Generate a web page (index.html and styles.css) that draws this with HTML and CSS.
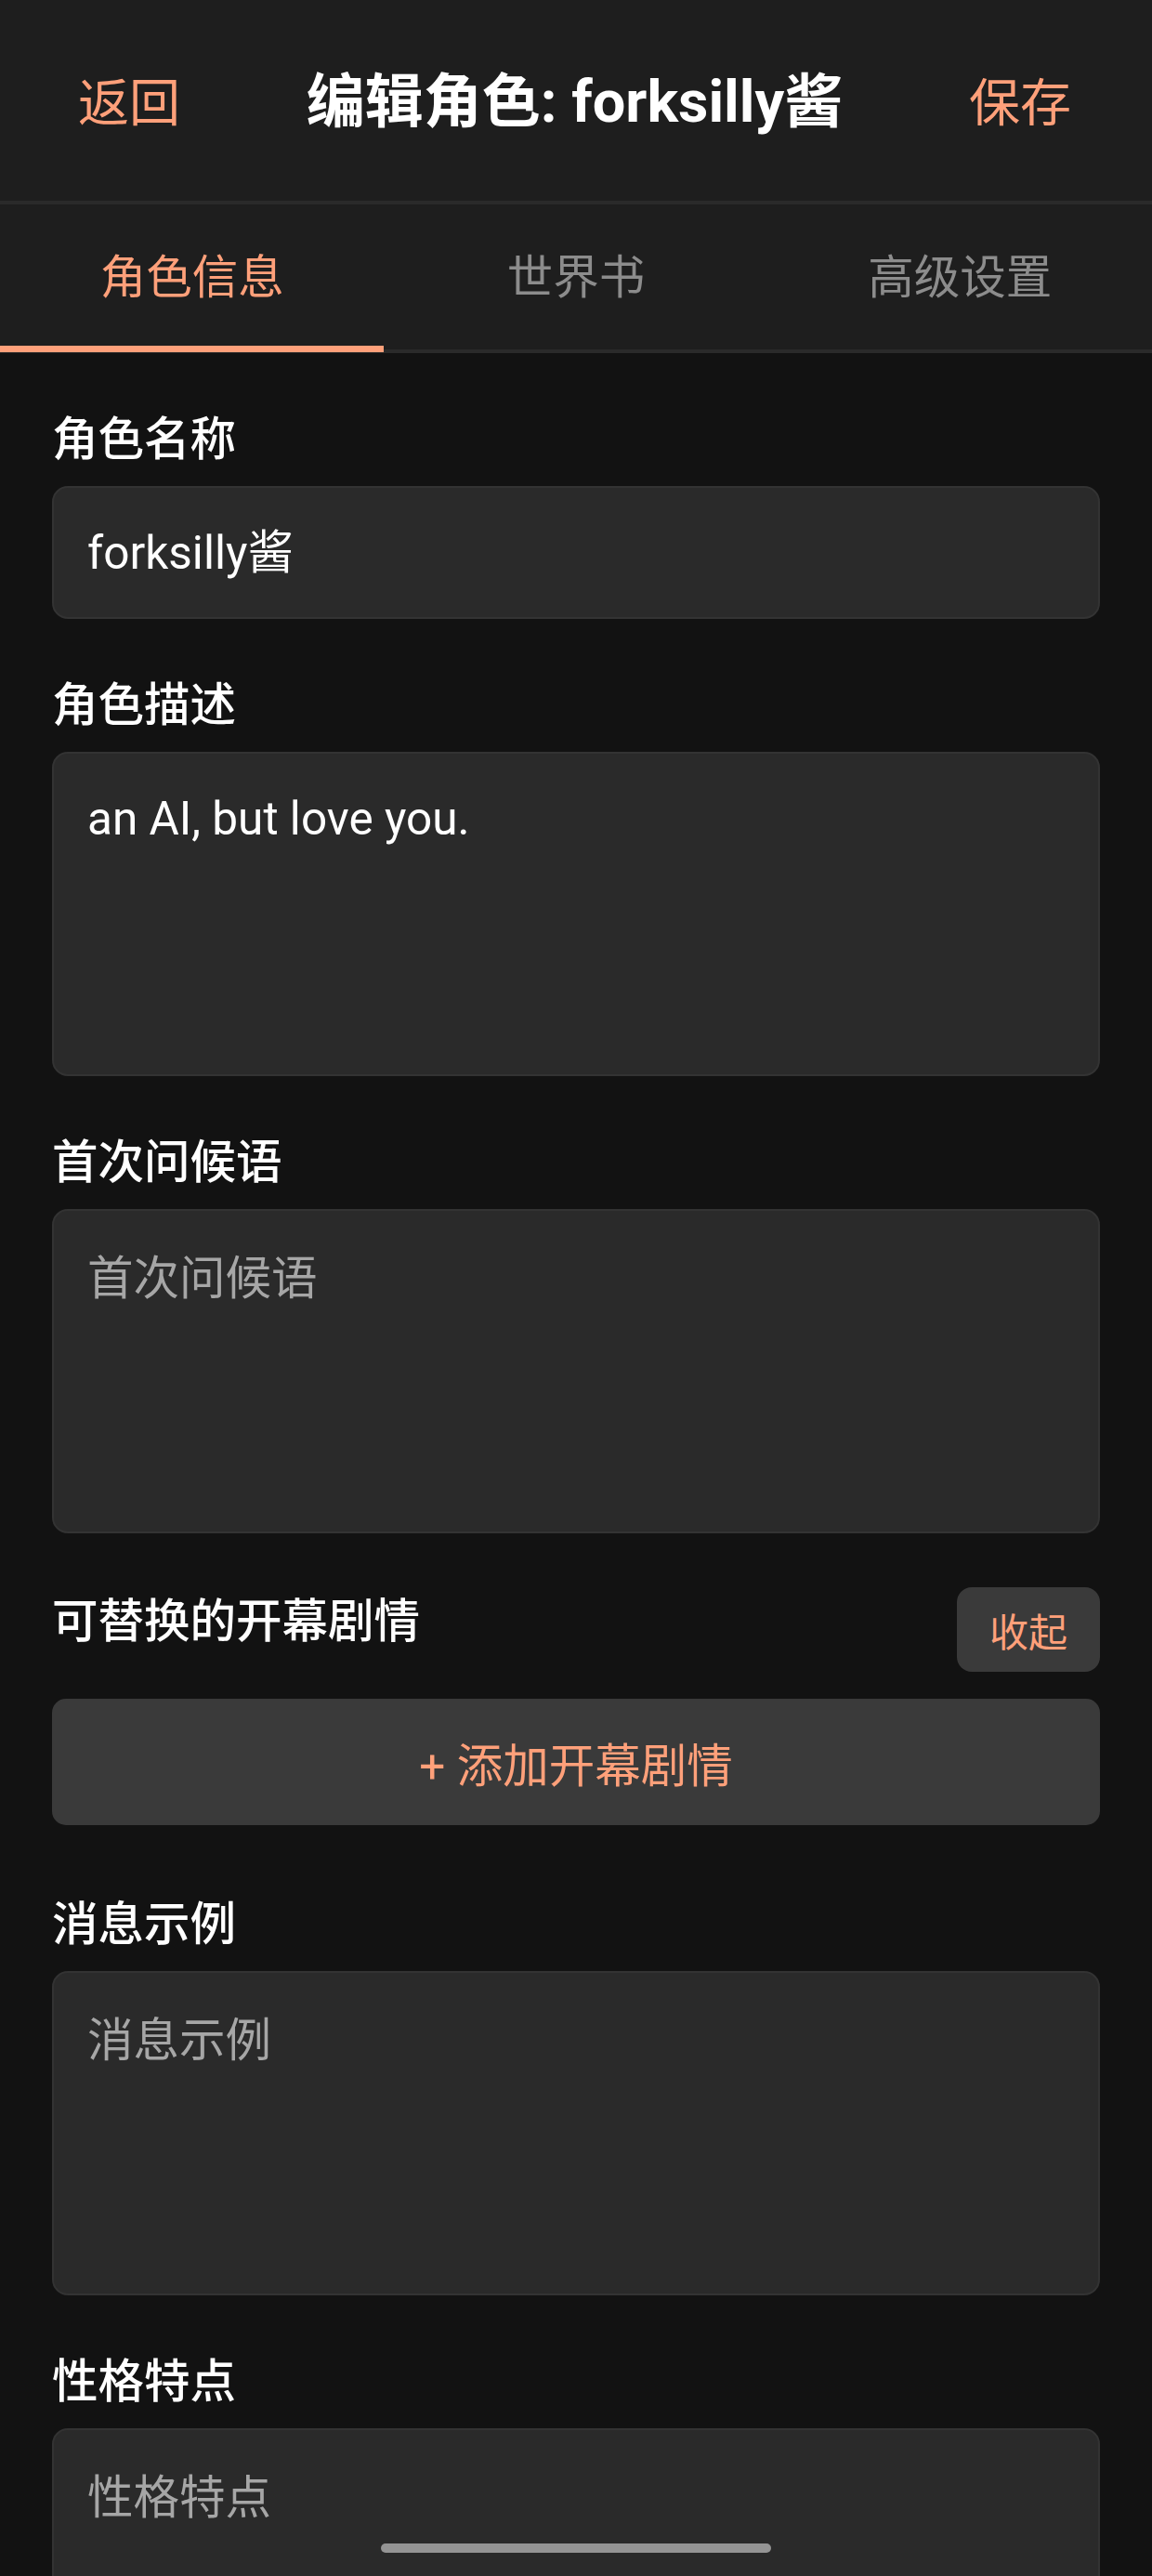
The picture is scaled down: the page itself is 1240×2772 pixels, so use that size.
FILE: index.html
```html
<!DOCTYPE html>
<html lang="zh-CN">
<head>
<meta charset="utf-8">
<title>编辑角色</title>
<link rel="stylesheet" href="styles.css">
</head>
<body>
<div class="app">
  <header class="topbar">
    <span class="topbar-btn">返回</span>
    <h1 class="topbar-title">编辑角色: forksilly酱</h1>
    <span class="topbar-btn">保存</span>
  </header>
  <nav class="tabs">
    <div class="tab tab-active">角色信息</div>
    <div class="tab">世界书</div>
    <div class="tab">高级设置</div>
  </nav>
  <main class="content">
    <section class="field">
      <div class="label">角色名称</div>
      <div class="control control-input">forksilly酱</div>
    </section>
    <section class="field">
      <div class="label">角色描述</div>
      <div class="control control-area">an AI, but love you.</div>
    </section>
    <section class="field">
      <div class="label">首次问候语</div>
      <div class="control control-area placeholder">首次问候语</div>
    </section>
    <section class="field field-openings">
      <div class="row">
        <div class="label">可替换的开幕剧情</div>
        <div class="small-btn">收起</div>
      </div>
      <div class="add-btn">+ 添加开幕剧情</div>
    </section>
    <section class="field">
      <div class="label">消息示例</div>
      <div class="control control-area placeholder">消息示例</div>
    </section>
    <section class="field">
      <div class="label">性格特点</div>
      <div class="control control-area placeholder">性格特点</div>
    </section>
  </main>
  <div class="home-bar"></div>
</div>
</body>
</html>
```
FILE: styles.css
```css
* { box-sizing: border-box; }
html, body {
  margin: 0;
  padding: 0;
  background: #121212;
  height: 2772px;
  overflow: hidden;
}
body {
  font-family: Roboto, "Noto Sans CJK SC", sans-serif;
  color: #ffffff;
}
.app {
  width: 1240px;
  min-height: 2772px;
  background: #121212;
}
.topbar {
  height: 220px;
  background: #1e1e1e;
  border-bottom: 4px solid #2a2a2a;
  display: flex;
  align-items: center;
  justify-content: space-between;
  padding: 0 87px 0 84px;
}
.topbar-btn {
  color: #ffa07a;
  font-size: 55px;
  line-height: 70px;
  margin-top: 6px;
}
.topbar-title {
  margin: 0;
  font-size: 63px;
  line-height: 80px;
  font-weight: 700;
  color: #ffffff;
  margin-top: 4px;
}
.tabs {
  display: flex;
  height: 160px;
  background: #1e1e1e;
  border-bottom: 4px solid #2a2a2a;
}
.tab {
  flex: 1;
  display: flex;
  align-items: center;
  justify-content: center;
  font-size: 49.5px;
  color: #8c8c8c;
  position: relative;
  padding-bottom: 8px;
}
.tab-active {
  color: #ffa07a;
}
.tab-active::after {
  content: "";
  position: absolute;
  left: 0;
  right: 0;
  bottom: -3px;
  height: 7px;
  background: #ffa07a;
}
.content {
  padding: 60px 56px 0 56px;
}
.field {
  margin-bottom: 60px;
}
.label {
  font-size: 49.5px;
  line-height: 66px;
  font-weight: 500;
  margin-bottom: 17px;
  color: #ffffff;
}
.control {
  background: #2a2a2a;
  border: 2px solid #333333;
  border-radius: 17px;
  font-size: 49.5px;
  line-height: 72px;
  color: #ffffff;
  padding: 0 36px;
}
.control-input {
  height: 143px;
  display: flex;
  align-items: center;
}
.control-area {
  height: 349px;
  padding-top: 34px;
}
.placeholder {
  color: #a6a6a6;
  padding-top: 37px;
}
.row {
  display: flex;
  align-items: center;
  justify-content: space-between;
  height: 91px;
}
.small-btn {
  background: #3a3a3a;
  color: #ffa07a;
  border-radius: 16px;
  width: 154px;
  height: 91px;
  display: flex;
  align-items: center;
  justify-content: center;
  font-size: 42px;
}
.field-openings {
  margin-top: -2px;
  margin-bottom: 74px;
}
.add-btn {
  margin-top: 29px;
  height: 136px;
  background: #3a3a3a;
  border-radius: 15px;
  color: #ffa07a;
  font-size: 49.5px;
  display: flex;
  align-items: center;
  justify-content: center;
}
.home-bar {
  position: fixed;
  left: 410px;
  top: 2737px;
  width: 420px;
  height: 10px;
  border-radius: 5px;
  background: #949494;
}
```
